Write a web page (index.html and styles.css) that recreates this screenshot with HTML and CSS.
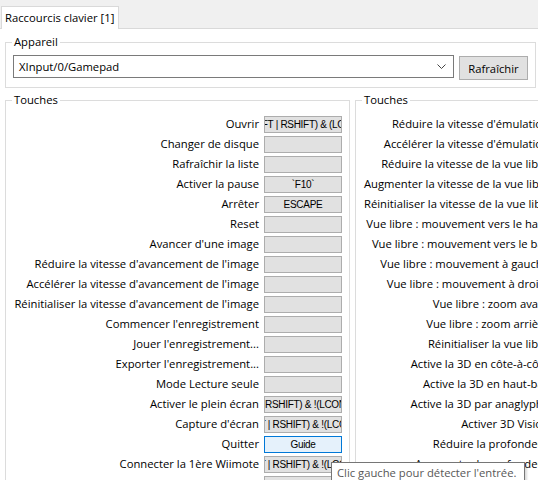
FILE: index.html
```html
<!DOCTYPE html>
<html lang="fr">
<head>
<meta charset="utf-8">
<title>Raccourcis clavier</title>
<link rel="stylesheet" href="styles.css">
</head>
<body>
<div class="tabstrip">
  <div class="tab">Raccourcis clavier [1]</div>
</div>
<div class="panel">
  <fieldset class="group device">
    <legend>Appareil</legend>
    <div class="device-row">
      <div class="combo">
        <span class="combo-text">XInput/0/Gamepad</span>
        <svg class="chevron" width="9" height="5" viewBox="0 0 9 5"><polyline points="0.5,0.5 4.5,4.5 8.5,0.5" fill="none" stroke="#444" stroke-width="1"/></svg>
      </div>
      <button class="btn">Rafraîchir</button>
    </div>
  </fieldset>
  <div class="columns">
    <fieldset class="group keys keys-left">
      <legend>Touches</legend>
      <div class="grid">
        <span class="label">Ouvrir</span><span class="key">FT | RSHIFT) &amp; (LC</span>
        <span class="label">Changer de disque</span><span class="key"></span>
        <span class="label">Rafraîchir la liste</span><span class="key"></span>
        <span class="label">Activer la pause</span><span class="key">`F10`</span>
        <span class="label">Arrêter</span><span class="key">ESCAPE</span>
        <span class="label">Reset</span><span class="key"></span>
        <span class="label">Avancer d'une image</span><span class="key"></span>
        <span class="label">Réduire la vitesse d'avancement de l'image</span><span class="key"></span>
        <span class="label">Accélérer la vitesse d'avancement de l'image</span><span class="key"></span>
        <span class="label">Réinitialiser la vitesse d'avancement de l'image</span><span class="key"></span>
        <span class="label">Commencer l'enregistrement</span><span class="key"></span>
        <span class="label">Jouer l'enregistrement...</span><span class="key"></span>
        <span class="label">Exporter l'enregistrement...</span><span class="key"></span>
        <span class="label">Mode Lecture seule</span><span class="key"></span>
        <span class="label">Activer le plein écran</span><span class="key">| RSHIFT) &amp; !(LCON</span>
        <span class="label">Capture d'écran</span><span class="key">T | RSHIFT) &amp; !(LCO</span>
        <span class="label">Quitter</span><span class="key key-hover">Guide</span>
        <span class="label">Connecter la 1ère Wiimote</span><span class="key">T | RSHIFT) &amp; !(LCO</span>
        <span class="label">Connecter la 2ème Wiimote</span><span class="key"></span>
      </div>
    </fieldset>
    <fieldset class="group keys keys-right">
      <legend>Touches</legend>
      <div class="grid">
        <span class="label">Réduire la vitesse d'émulation</span><span class="key"></span>
        <span class="label">Accélérer la vitesse d'émulation</span><span class="key"></span>
        <span class="label">Réduire la vitesse de la vue libre</span><span class="key"></span>
        <span class="label">Augmenter la vitesse de la vue libre</span><span class="key"></span>
        <span class="label">Réinitialiser la vitesse de la vue libre</span><span class="key"></span>
        <span class="label">Vue libre : mouvement vers le haut</span><span class="key"></span>
        <span class="label">Vue libre : mouvement vers le bas</span><span class="key"></span>
        <span class="label">Vue libre : mouvement à gauche</span><span class="key"></span>
        <span class="label">Vue libre : mouvement à droite</span><span class="key"></span>
        <span class="label">Vue libre : zoom avant</span><span class="key"></span>
        <span class="label">Vue libre : zoom arrière</span><span class="key"></span>
        <span class="label">Réinitialiser la vue libre</span><span class="key"></span>
        <span class="label">Active la 3D en côte-à-côte</span><span class="key"></span>
        <span class="label">Active la 3D en haut-bas</span><span class="key"></span>
        <span class="label">Active la 3D par anaglyphe</span><span class="key"></span>
        <span class="label">Activer 3D Vision</span><span class="key"></span>
        <span class="label">Réduire la profondeur</span><span class="key"></span>
        <span class="label">Augmenter la profondeur</span><span class="key"></span>
        <span class="label">Réduire la convergence</span><span class="key"></span>
      </div>
    </fieldset>
  </div>
</div>
<div class="tooltip">Clic gauche pour détecter l'entrée.</div>
</body>
</html>
```
FILE: styles.css
```css
html, body {
  margin: 0;
  padding: 0;
}
body {
  width: 538px;
  height: 480px;
  overflow: hidden;
  position: relative;
  background: #ffffff;
  color: #000000;
  font-family: "Open Sans", "Noto Sans", sans-serif;
  font-size: 11.25px;
}
.tabstrip {
  height: 28px;
  background: #f0f0f0;
  border-bottom: 1px solid #d9d9d9;
  display: flex;
  align-items: flex-end;
}
.tab {
  box-sizing: border-box;
  height: 23px;
  margin-bottom: -1px;
  margin-left: 1px;
  padding: 0 4px 0 3px;
  background: #ffffff;
  border: 1px solid #d9d9d9;
  border-bottom: none;
  line-height: 21px;
  white-space: nowrap;
}
.panel {
  padding: 5px 2px 0 5px;
}
.group {
  margin: 0;
  min-width: 0;
  border: 1px solid #dcdcdc;
  box-sizing: border-box;
}
.group legend {
  padding: 0 2px;
  line-height: 16px;
}
.device {
  padding: 5px 6px 7px 6px;
}
.device-row {
  display: flex;
  align-items: flex-start;
  gap: 5px;
  margin-left: 1px;
}
.combo {
  box-sizing: border-box;
  width: 441px;
  height: 23px;
  border: 1px solid #7a7a7a;
  background: #ffffff;
  display: flex;
  align-items: center;
  justify-content: space-between;
  padding: 0 7px 0 5px;
}
.chevron {
  display: block;
}
.btn {
  box-sizing: border-box;
  width: 69px;
  height: 24px;
  margin: 1px 0 0 0;
  border: 1px solid #adadad;
  background: #e1e1e1;
  font-family: inherit;
  font-size: 11.25px;
  color: #000;
  padding: 0;
}
.columns {
  display: flex;
  gap: 5px;
  margin-top: 4px;
}
.keys {
  flex: none;
  padding: 6px 7px 0 6px;
  height: 420px;
}
.keys-left {
  width: 345px;
}
.keys-right {
  width: 320px;
}
.grid {
  display: grid;
  grid-auto-rows: 20px;
  column-gap: 4px;
  margin-left: 2px;
  align-items: center;
}
.keys-left .grid {
  grid-template-columns: 246px 78px;
}
.keys-right .grid {
  grid-template-columns: 185px 78px;
}
.label {
  text-align: right;
  white-space: nowrap;
  line-height: 20px;
}
.keys-left .label {
  margin-right: 1px;
}
.key {
  box-sizing: border-box;
  height: 17px;
  border: 1px solid #adadad;
  background: #e1e1e1;
  display: flex;
  align-items: center;
  justify-content: center;
  overflow: hidden;
  white-space: nowrap;
  font-family: "Liberation Sans", Arial, sans-serif;
  font-size: 10px;
  letter-spacing: -0.3px;
  color: #000;
}
.key-hover {
  background: #e5f1fb;
  border-color: #0078d7;
}
.tooltip {
  position: absolute;
  left: 331px;
  top: 462px;
  box-sizing: border-box;
  width: 194px;
  height: 22px;
  border: 1px solid #767676;
  background: #ffffff;
  color: #575757;
  padding: 0 5px;
  line-height: 19px;
  white-space: nowrap;
  box-shadow: 2px 2px 2px rgba(0, 0, 0, 0.15);
}
```
